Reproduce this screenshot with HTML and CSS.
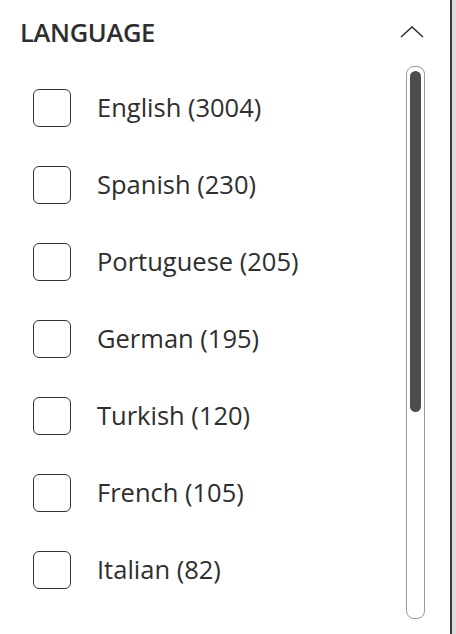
FILE: index.html
```html
<!DOCTYPE html>
<html>
<head>
<meta charset="utf-8">
<link rel="stylesheet" href="styles.css">
</head>
<body>
<div class="panel">
  <div class="header">
    <h2 class="title">LANGUAGE</h2>
    <svg class="chevron" width="24" height="12" viewBox="0 0 24 12">
      <path d="M1 11 L12 1 L23 11" fill="none" stroke="#333" stroke-width="1.6"/>
    </svg>
  </div>
  <div class="content">
    <ul class="list">
      <li class="row"><span class="box"></span><span class="label">English (3004)</span></li>
      <li class="row"><span class="box"></span><span class="label">Spanish (230)</span></li>
      <li class="row"><span class="box"></span><span class="label">Portuguese (205)</span></li>
      <li class="row"><span class="box"></span><span class="label">German (195)</span></li>
      <li class="row"><span class="box"></span><span class="label">Turkish (120)</span></li>
      <li class="row"><span class="box"></span><span class="label">French (105)</span></li>
      <li class="row"><span class="box"></span><span class="label">Italian (82)</span></li>
    </ul>
    <div class="track"><div class="thumb"></div></div>
  </div>
</div>
</body>
</html>
```

FILE: styles.css
```css
html, body {
  margin: 0;
  padding: 0;
}
body {
  background: #dcdcdc;
  width: 456px;
  height: 634px;
  overflow: hidden;
  font-family: "Open Sans", "Noto Sans", sans-serif;
  color: #2e2e2e;
}
.panel {
  width: 452px;
  height: 634px;
  box-sizing: border-box;
  background: #fff;
  border-right: 2px solid #3a3a3a;
  display: flex;
  flex-direction: column;
}
.header {
  height: 66px;
  box-sizing: border-box;
  padding: 16px 26px 0 20px;
  display: flex;
  justify-content: space-between;
  align-items: flex-start;
}
.title {
  margin: 0;
  font-size: 25.5px;
  line-height: 32px;
  font-weight: 600;
  color: #2e2e2e;
  letter-spacing: -0.35px;
}
.chevron {
  margin-top: 10px;
  display: block;
}
.content {
  height: 553px;
  display: flex;
  padding-right: 25px;
}
.list {
  list-style: none;
  margin: 0;
  padding: 3px 0 0 33px;
  flex: 1;
  overflow: hidden;
}
.row {
  height: 77px;
  display: flex;
  align-items: center;
  gap: 26px;
}
.box {
  width: 38px;
  height: 38px;
  box-sizing: border-box;
  border: 1px solid #333;
  border-radius: 6px;
  flex: none;
}
.label {
  font-size: 25.5px;
  line-height: 32px;
  color: #2e2e2e;
  margin-top: -2px;
}
.track {
  width: 19px;
  height: 553px;
  box-sizing: border-box;
  border: 1px solid #9a9a9a;
  border-radius: 8px;
  padding: 4px 3px;
}
.thumb {
  width: 11px;
  height: 341px;
  background: #4d4d4d;
  border-radius: 6px;
}
```
